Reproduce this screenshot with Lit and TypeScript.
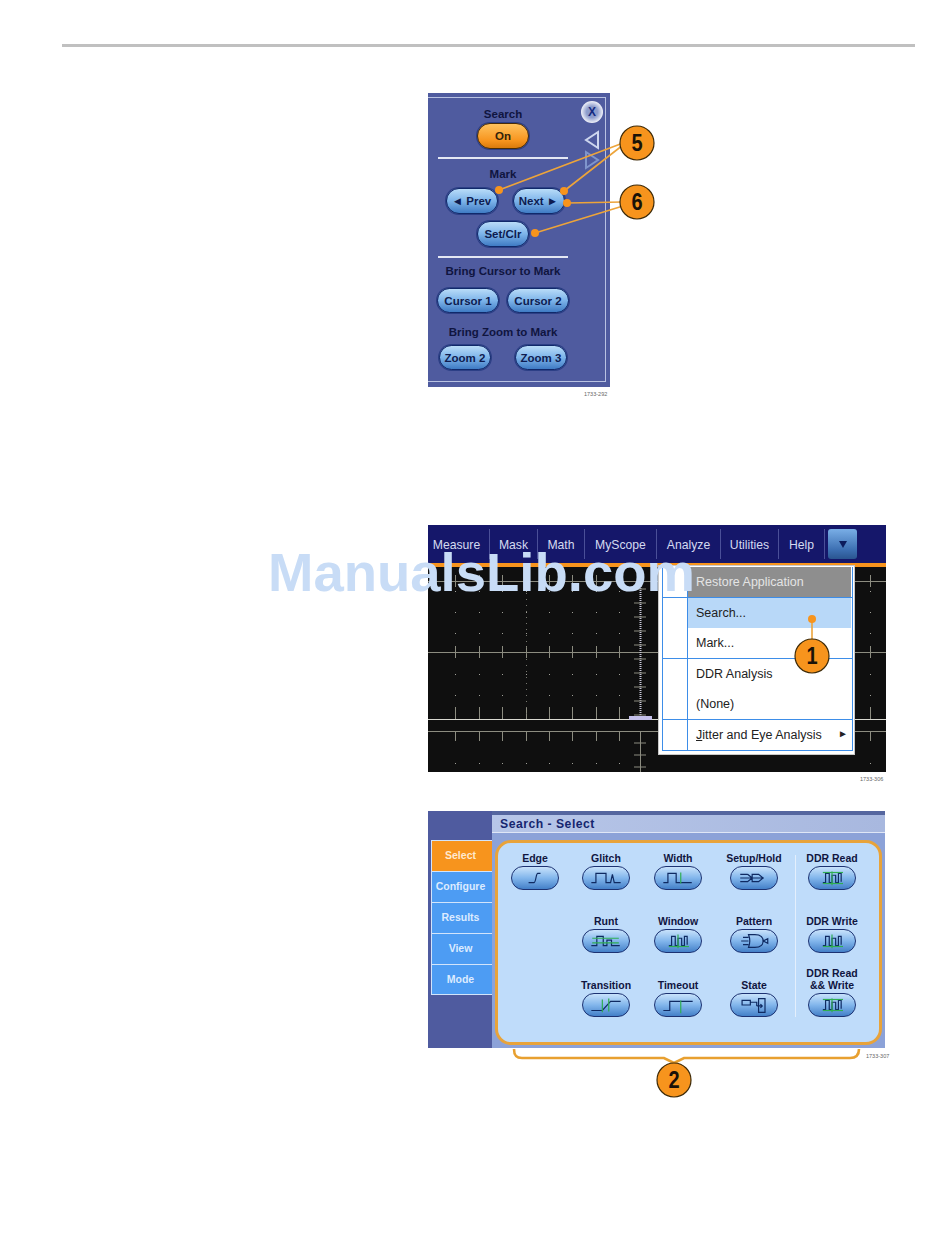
import { LitElement, html, css, svg } from "lit";
import { customElement } from "lit/decorators.js";

const wave = "M14 17H17V7H21V17H24V9H28V17H31V7H34V16";

const icons: Record<string, unknown> = {
  edge: svg`<path d="M17 17H23C25 17 25 7 27 7H30" />`,
  glitch: svg`<path d="M8 17H13V7H24V17H29L31 8L33 17H40" />`,
  runt: svg`<path d="M8 17H14V7H21V17H25V11H30V17H39" /><path class="g" d="M9 9H38M9 14H38" />`,
  width: svg`<path d="M8 17H13V7H22V17H39" /><path class="g" d="M27 6V18" />`,
  window: wave2(true, false),
  setup: svg`<path d="M9 8H17M9 12H34M9 16H17L22 12M17 8L22 12M22 8H29L34 12L29 16H22V8Z" />`,
  pattern: svg`<path d="M12 8H18M12 16H18M10 12H18M18 5H25C32 5 34 9 34 12C34 15 32 19 25 19H18C20 14 20 10 18 5ZM34 12L39 9.500V14.500Z" />`,
  transition: svg`<path d="M8 18H20L29 8H40" /><path class="g" d="M20 6V20M27 5V19" />`,
  timeout: svg`<path d="M8 18H15V8H40" /><path class="g" d="M27 7V21" />`,
  state: svg`<path d="M11 7H20V12H11ZM20 9H27V13M29 5H36V20H29ZM27 13H33M31 11L33 13L31 15" />`,
  ddrr: wave2(true, true),
  ddrw: wave2(true, false),
};

function wave2(bottom: boolean, top: boolean) {
  return svg`<path d=${wave} />${top ? svg`<path class="g" d="M14 6H36" />` : ""}${bottom ? svg`<path class="g" d="M14 18H36" />` : ""}<path class="g" d="M24 5V20" />`;
}

const grid = [
  { l: "Edge", i: "edge" }, { l: "Glitch", i: "glitch" }, { l: "Width", i: "width" }, { l: "Setup/Hold", i: "setup" }, { l: "DDR Read", i: "ddrr" },
  null, { l: "Runt", i: "runt" }, { l: "Window", i: "window" }, { l: "Pattern", i: "pattern" }, { l: "DDR Write", i: "ddrw" },
  null, { l: "Transition", i: "transition" }, { l: "Timeout", i: "timeout" }, { l: "State", i: "state" }, { l: "DDR Read\n&& Write", i: "ddrr" },
];

function callout(cx: number, cy: number, n: string) {
  return svg`<circle class="call" cx=${cx} cy=${cy} r="17" />
    <text class="num" transform="translate(${cx} ${cy + 8}) scale(1 1.150)">${n}</text>`;
}
function dot(x: number, y: number) {
  return svg`<circle class="dot" cx=${x} cy=${y} r="4" />`;
}

function scope() {
  const v: unknown[] = [];
  const xs = [27, 51, 74, 98, 121, 144, 168, 191, 442];
  const rows = [24, 45, 66, 107, 128, 148, 168];
  for (const x of xs) {
    for (const y of rows) v.push(svg`<rect x=${x} y=${y} width="1" height="1" fill="#a0a098" />`);
    v.push(svg`<line x1=${x + 0.5} x2=${x + 0.5} y1="8" y2="20" class="gl" />`);
    v.push(svg`<line x1=${x + 0.5} x2=${x + 0.5} y1="79" y2="91" class="gl" />`);
    v.push(svg`<line x1=${x + 0.5} x2=${x + 0.5} y1="140" y2="152" class="gl" />`);
    v.push(svg`<line x1=${x + 0.5} x2=${x + 0.5} y1="164" y2="174" class="gl" />`);
    v.push(svg`<rect x=${x} y="196" width="1" height="1" fill="#a0a098" />`);
  }
  const ticks: unknown[] = [];
  for (let y = 22; y < 152; y += 14) ticks.push(svg`<line x1="206" x2="218" y1=${y} y2=${y} class="gl" />`);
  for (const y of [176, 188, 200]) ticks.push(svg`<line x1="206" x2="218" y1=${y} y2=${y} class="gl" />`);
  return svg`<svg class="scope" viewBox="0 0 458 205" width="458" height="205">
    <rect width="458" height="205" fill="#0f0f0f" />
    <line x1="0" x2="458" y1="14.500" y2="14.500" class="gl" />
    <line x1="0" x2="458" y1="85.500" y2="85.500" class="gl" />
    <line x1="0" x2="458" y1="164.500" y2="164.500" class="gl" />
    <line x1="0" x2="458" y1="152.500" y2="152.500" stroke="#d8d8d0" />
    <line x1="212.500" x2="212.500" y1="5" y2="150" stroke="#c8c8d8" stroke-dasharray="1 1" stroke-width="2" />
    <line x1="212.500" x2="212.500" y1="164" y2="205" class="gl" />
    ${v}${ticks}
    <rect x="201" y="149" width="23" height="4" fill="#c4c0ea" />
    <line x1="98.500" x2="98.500" y1="14" y2="150" stroke="#77776f" stroke-dasharray="1 5" />
  </svg>`;
}

@customElement("app-root")
export class AppRoot extends LitElement {
  static styles = css`
    :host { display: block; width: 950px; height: 1254px; background: #fff; font-family: "Liberation Sans", Arial, sans-serif; overflow: hidden; }
    .page { display: flex; flex-direction: column; padding-top: 44px; }
    .rule { height: 3px; margin: 0 35px 0 62px; background: #c0c0c0; }
    .fig { position: relative; margin-left: 428px; }
    .f1 { width: 182px; height: 294px; margin-top: 46px; }
    .f2 { width: 458px; height: 247px; margin-top: 138px; }
    .f3 { width: 457px; height: 237px; margin-top: 39px; }
    .over { position: absolute; left: 0; top: 0; overflow: visible; pointer-events: none; }
    .call { fill: #f7941d; stroke: #3d2a08; stroke-width: 1.2; }
    .num { font: bold 20px "Liberation Sans", sans-serif; fill: #1a1208; text-anchor: middle; }
    .dot { fill: #f7941d; }
    .ln { stroke: #eda43a; stroke-width: 1.600; fill: none; }
    .brace { stroke: #e8a030; stroke-width: 2.600; fill: none; }
    .fid { position: absolute; font-size: 5.500px; color: #666; white-space: nowrap; }

    .panel { box-sizing: border-box; height: 100%; background: #4f5b9f; padding: 4px 4px 5px 0; }
    .frame { box-sizing: border-box; height: 100%; border: 1px solid #b9c2e2; border-left: 0; display: flex; padding-left: 8px; }
    .main { width: 134px; display: flex; flex-direction: column; align-items: center; padding-top: 9px; }
    .side { margin-left: 11px; padding-top: 3px; display: flex; flex-direction: column; align-items: center; width: 22px; }
    .lab { font-size: 11.500px; line-height: 14px; font-weight: bold; color: #10153f; white-space: nowrap; }
    .pill { box-sizing: border-box; height: 26px; border-radius: 13px; border: 1px solid #10296a; background: linear-gradient(#b9dcf8, #7db4ea 50%, #3f7bc4); color: #0e1c50; font-weight: bold; font-size: 11.500px; display: flex; align-items: center; justify-content: center; box-shadow: 0 0 0 1px #2c3f86; white-space: nowrap; }
    .w52 { width: 52px; }
    .w62 { width: 62px; }
    .h25 { height: 25px; }
    .on { background: linear-gradient(#ffc25e, #f7941d 70%, #d97a0c); border-color: #4a2c06; color: #33220a; }
    .hr { align-self: stretch; margin: 8px 2px 0; height: 2px; background: #e4e8f4; }
    .hr2 { margin-top: 9px; }
    .row { display: flex; }
    .r-nav { margin-top: 7px; gap: 15px; padding-left: 4px; }
    .r-cur { margin-top: 10px; gap: 8px; }
    .r-zoom { margin-top: 6px; gap: 24px; }
    .mt8 { margin-top: 8px; }
    .mt6 { margin-top: 6px; }
    .mt12 { margin-top: 12px; }
    .mt2 { margin-top: 2px; }
    .mt7 { margin-top: 7px; }
    .close { box-sizing: border-box; width: 22px; height: 22px; border-radius: 50%; background: radial-gradient(#8d9ccc 35%, #eef0f8 70%); color: #152a80; font-size: 12px; font-weight: bold; display: flex; align-items: center; justify-content: center; }

    .bar { height: 38px; background: #15176a; display: flex; color: #d4daf0; font-size: 12.200px; }
    .cell { box-sizing: border-box; display: flex; align-items: center; justify-content: center; border-right: 1px solid #4a4f98; margin: 4px 0; padding-top: 2px; }
    .cell:first-child { padding-right: 4px; }
    .down { width: 29px; height: 30px; margin: 4px 0 0 3px; border-radius: 3px; background: linear-gradient(#79aee6, #3c6fb2 70%, #2a5590); display: flex; align-items: center; justify-content: center; }
    .strip { height: 4px; background: #f7941d; }
    .scope { display: block; }
    .menu { position: absolute; left: 230px; top: 40px; width: 197px; height: 190px; box-sizing: border-box; background: #fff; border: 1px solid #c8c8c8; padding: 1px 1px 3px 3px; font-size: 12.500px; color: #222; }
    .list { height: 100%; box-sizing: border-box; border: 1px solid #3d8de8; border-top: 0; display: flex; flex-direction: column; }
    .it { flex: 1; display: flex; min-height: 0; }
    .it.sep { border-top: 1px solid #3d8de8; }
    .gut { width: 24px; border-right: 1px solid #3d8de8; flex: none; }
    .txt { flex: 1; display: flex; align-items: center; padding-left: 8px; justify-content: space-between; padding-right: 4px; }
    .gray { background: #8e8e8e; color: #e4e4e4; margin-right: 1px; }
    .hi { background: #b8d8f8; margin-right: 1px; }
    .arrow { font-size: 10px; margin-top: -3px; }
    .mark { position: absolute; left: -160px; top: 20px; font-size: 54.500px; line-height: 56px; font-weight: bold; color: #c8dcf6; white-space: nowrap; }

    .wrap { height: 100%; display: grid; grid-template-columns: 64px 393px; background: #4f5b9f; }
    .tabs { padding: 29px 0 0 3px; display: flex; flex-direction: column; }
    .tab { box-sizing: border-box; height: 31px; padding: 0 3px 2px 0; background: #4d9cf3; border-top: 1px solid #d2e4fb; border-left: 1px solid #d2e4fb; color: #dcebff; font-size: 10.500px; font-weight: bold; display: flex; align-items: center; justify-content: center; }
    .tab:last-child { border-bottom: 1px solid #d2e4fb; }
    .tab.sel { background: #f7941d; color: #ffe9cf; }
    .right { display: flex; flex-direction: column; background: #8ca2d8; border-top: 4px solid #55669f; }
    .ttl { height: 18px; box-sizing: border-box; padding-left: 8px; background: linear-gradient(90deg, #b7c6e8, #a8b8df); color: #16266f; font-weight: bold; font-size: 12.200px; line-height: 19px; letter-spacing: .5px; border-bottom: 1px solid #dfe6f6; }
    .box { flex: 1; margin: 7px 3px 3px; box-sizing: border-box; border: 3px solid #e8a33a; border-radius: 16px; background: #bfdcfa; display: grid; grid-template-columns: 74px 68px 76px 76px 6px 68px; grid-template-rows: 47px 63px 64px; }
    .bar5 { grid-column: 5; grid-row: 1 / 4; margin: 12px 0 0 3px; width: 1px; background: #e4effc; }
    .c { display: flex; flex-direction: column; align-items: center; justify-content: flex-end; }
    .cl { font-size: 10.500px; line-height: 12px; font-weight: bold; color: #10153f; text-align: center; white-space: pre-line; margin-bottom: 2px; }
    .ib { box-sizing: border-box; width: 48px; height: 24px; border-radius: 12px; border: 1.500px solid #1c3272; background: linear-gradient(#c8e2fb, #82b6ec 50%, #4480c8); display: block; }
    .ib svg { display: block; width: 100%; height: 100%; fill: none; stroke: #0f2a62; stroke-width: 1.300; }
    .ib svg .g { stroke: #2fae52; }
    .gl { stroke: #8c8c80; stroke-width: 1; }
  `;

  private pill(t: string, cls = "w52") {
    return html`<div class="pill ${cls}">${t}</div>`;
  }

  private figOne() {
    return html`<div class="fig f1">
      <div class="panel"><div class="frame">
        <div class="main">
          <div class="lab">Search</div>
          ${this.pill("On", "w52 on mt2")}
          <div class="hr"></div>
          <div class="lab mt8">Mark</div>
          <div class="row r-nav">${this.pill("◄ Prev")}${this.pill("Next ►")}</div>
          ${this.pill("Set/Clr", "w52 mt7")}
          <div class="hr hr2"></div>
          <div class="lab mt6">Bring Cursor to Mark</div>
          <div class="row r-cur">${this.pill("Cursor 1", "w62 h25")}${this.pill("Cursor 2", "w62 h25")}</div>
          <div class="lab mt12">Bring Zoom to Mark</div>
          <div class="row r-zoom">${this.pill("Zoom 2", "w52 h25")}${this.pill("Zoom 3", "w52 h25")}</div>
        </div>
        <div class="side">
          <div class="close">X</div>
          <svg class="mt7" width="18" height="20" viewBox="0 0 18 20"><path d="M15 2V18L3 10Z" fill="none" stroke="#cdd6ee" stroke-width="2"/></svg>
          <svg width="18" height="20" viewBox="0 0 18 20"><path d="M3 2V18L15 10Z" fill="none" stroke="#7f95cc" stroke-width="2"/></svg>
        </div>
      </div></div>
      <svg class="over" width="182" height="294">
        <path class="ln" d="M195 50L71 97M195 52L136 98M195 109L139 110M195 113L107 140" />
        ${dot(71, 97)}${dot(136, 98)}${dot(139, 110)}${dot(107, 140)}
        ${callout(209, 50, "5")}${callout(209, 109, "6")}
      </svg>
      <div class="fid" style="left:156px;top:298px">1733-292</div>
    </div>`;
  }

  private figTwo() {
    const menus: [string, number][] = [["Measure", 62], ["Mask", 48], ["Math", 47], ["MyScope", 72], ["Analyze", 64], ["Utilities", 58], ["Help", 46]];
    return html`<div class="fig f2">
      <div class="bar">
        ${menus.map(([m, w]) => html`<div class="cell" style="width:${w}px">${m}</div>`)}
        <div class="down"><svg width="10" height="10" viewBox="0 0 10 10"><path d="M1 2H9L5 9Z" fill="#0c1c5c"/></svg></div>
      </div>
      <div class="strip"></div>
      ${scope()}
      <div class="menu"><div class="list">
        <div class="it"><div class="gut"></div><div class="txt gray">Restore Application</div></div>
        <div class="it sep"><div class="gut"></div><div class="txt hi">Search...</div></div>
        <div class="it"><div class="gut"></div><div class="txt">Mark...</div></div>
        <div class="it sep"><div class="gut"></div><div class="txt">DDR Analysis</div></div>
        <div class="it"><div class="gut"></div><div class="txt">(None)</div></div>
        <div class="it sep"><div class="gut"></div><div class="txt"><span><u>J</u>itter and Eye Analysis</span><span class="arrow">►</span></div></div>
      </div></div>
      <div class="mark">ManualsLib.com</div>
      <svg class="over" width="458" height="247">
        <path class="ln" d="M384 94V114" />${dot(384, 94)}
        ${callout(384, 131, "1")}
      </svg>
      <div class="fid" style="left:432px;top:251px">1733-306</div>
    </div>`;
  }

  private figThree() {
    return html`<div class="fig f3">
      <div class="wrap">
        <div class="tabs">
          <div class="tab sel">Select</div>
          <div class="tab">Configure</div>
          <div class="tab">Results</div>
          <div class="tab">View</div>
          <div class="tab">Mode</div>
        </div>
        <div class="right">
          <div class="ttl">Search - Select</div>
          <div class="box">
            <div class="bar5"></div>
            ${grid.map((g) => g ? html`<div class="c"><div class="cl">${g.l}</div><div class="ib"><svg viewBox="0 0 48 24">${icons[g.i]}</svg></div></div>` : html`<div></div>`)}
          </div>
        </div>
      </div>
      <svg class="over" width="457" height="237">
        <path class="brace" d="M86 238C86 244 88 247 94 247H236L246 252L256 247H422C428 247 431 244 431 238" />
        ${callout(246, 269, "2")}
      </svg>
      <div class="fid" style="left:438px;top:242px">1733-307</div>
    </div>`;
  }

  render() {
    return html`<div class="page">
      <div class="rule"></div>
      ${this.figOne()}
      ${this.figTwo()}
      ${this.figThree()}
    </div>`;
  }
}
